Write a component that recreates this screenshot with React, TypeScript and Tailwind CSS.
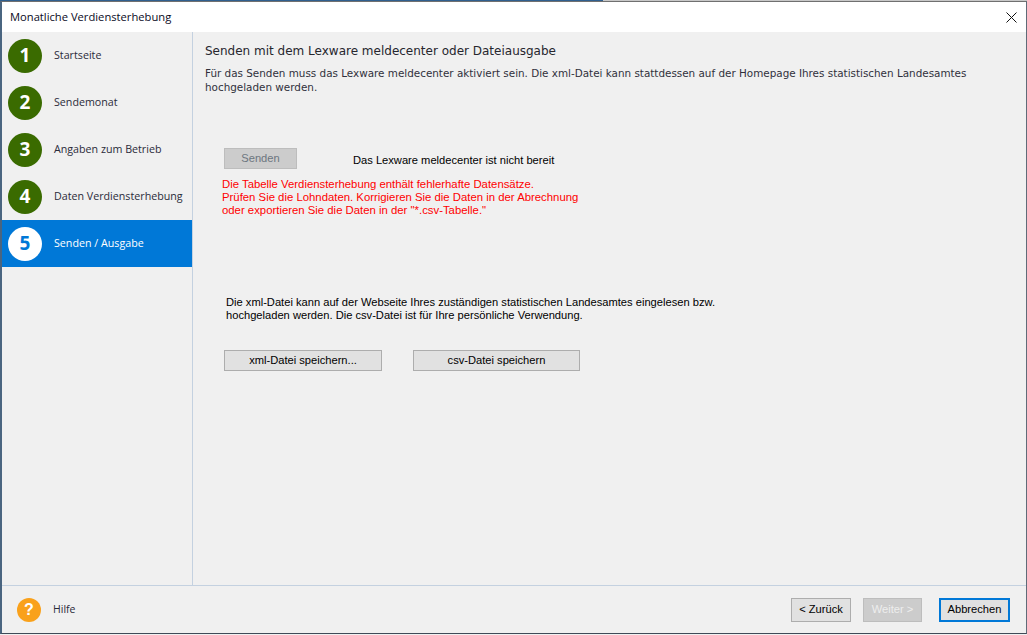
const steps = [
  { no: 1, label: "Startseite" },
  { no: 2, label: "Sendemonat" },
  { no: 3, label: "Angaben zum Betrieb" },
  { no: 4, label: "Daten Verdiensterhebung" },
  { no: 5, label: "Senden / Ausgabe", active: true },
];

const sans = "font-['Liberation_Sans',Arial,sans-serif]";
const ui = "font-['Open_Sans','Noto_Sans',sans-serif]";

function WizardStep({ no, label, active }: { no: number; label: string; active?: boolean }) {
  return (
    <div className={active ? "flex h-[47px] items-center bg-[#0078d7] pl-[6px] text-white" : "flex h-[47px] items-center pl-[6px] text-[#2b2b3a]"}>
      <div
        className={
          active
            ? "flex h-[34px] w-[34px] items-center justify-center rounded-full bg-white text-[19px] font-bold text-[#0078d7]"
            : "flex h-[34px] w-[34px] items-center justify-center rounded-full bg-[#3a6b00] text-[19px] font-bold text-white"
        }
      >
        {no}
      </div>
      <span className="ml-[12px] text-[10.7px]">{label}</span>
    </div>
  );
}

export default function App() {
  return (
    <div className={`h-[635px] w-[1027px] overflow-hidden bg-[#f0f0f0] ${sans}`}>
      <div className="flex h-[1px]">
        <div className="w-[603px] bg-[#2f5f8f]" />
        <div className="flex-1 bg-[#c8c8c8]" />
      </div>
      <div className="flex h-[633px] flex-col border-t border-r border-b border-l-2 border-t-[#707070] border-r-[#5f6b78] border-b-[#3f4a57] border-l-[#4a6580]">
        <div className="flex h-[30px] shrink-0 items-center justify-between bg-white pr-[9px] pl-[8px]">
          <span className={`text-[11.2px] text-[#0a0a1e] ${ui}`}>Monatliche Verdiensterhebung</span>
          <svg width="11" height="11" viewBox="0 0 11 11" className="text-[#111]">
            <path d="M0.5 0.5 L10.5 10.5 M10.5 0.5 L0.5 10.5" stroke="currentColor" strokeWidth="1" fill="none" />
          </svg>
        </div>

        <div className="flex min-h-0 flex-1">
          <aside className={`w-[191px] shrink-0 border-r border-r-[#c4d1e0] ${ui}`}>
            {steps.map((step) => (
              <WizardStep key={step.no} {...step} />
            ))}
          </aside>

          <main className="flex-1 text-[11.15px] text-black">
            <div className="pt-[12px] pl-[12px]">
              <h1 className="font-['DejaVu_Sans',Verdana,sans-serif] text-[12px] leading-[15px] font-normal text-[#26262e]">
                Senden mit dem Lexware meldecenter oder Dateiausgabe
              </h1>
              <p className="mt-[7px] w-[790px] font-['DejaVu_Sans',Verdana,sans-serif] text-[10.4px] leading-[14px] text-[#30303c]">
                Für das Senden muss das Lexware meldecenter aktiviert sein. Die xml-Datei kann stattdessen auf der Homepage Ihres statistischen Landesamtes hochgeladen werden.
              </p>
            </div>

            <div className="mt-[54px] flex items-center pl-[31px]">
              <button className="h-[21px] w-[73px] border border-[#bdbdbd] bg-[#cccccc] text-[#6d7680]">Senden</button>
              <span className="ml-[56px] pt-[4px]">Das Lexware meldecenter ist nicht bereit</span>
            </div>

            <p className="mt-[9px] pl-[29px] text-[11.35px] leading-[13px] text-[#ff0000]">
              Die Tabelle Verdiensterhebung enthält fehlerhafte Datensätze.
              <br />
              Prüfen Sie die Lohndaten. Korrigieren Sie die Daten in der Abrechnung
              <br />
              oder exportieren Sie die Daten in der "*.csv-Tabelle."
            </p>

            <p className="mt-[79px] pl-[33px] leading-[13px]">
              Die xml-Datei kann auf der Webseite Ihres zuständigen statistischen Landesamtes eingelesen bzw.
              <br />
              hochgeladen werden. Die csv-Datei ist für Ihre persönliche Verwendung.
            </p>

            <div className="mt-[28px] flex gap-[31px] pl-[31px]">
              <button className="h-[21px] w-[158px] border border-[#adadad] bg-[#e1e1e1]">xml-Datei speichern...</button>
              <button className="h-[21px] w-[167px] border border-[#adadad] bg-[#e1e1e1]">csv-Datei speichern</button>
            </div>
          </main>
        </div>

        <footer className="flex h-[48px] shrink-0 items-center border-t border-t-[#c4d1e0] pr-[16px] pl-[15px]">
          <div className="flex h-[24px] w-[24px] items-center justify-center rounded-full bg-[#f9a11b] text-[16px] font-bold text-white">?</div>
          <span className={`ml-[12px] text-[10.5px] text-[#2b2b3a] ${ui}`}>Hilfe</span>
          <div className="ml-auto flex items-center text-[11.15px]">
            <button className="h-[24px] w-[60px] border border-[#adadad] bg-[#e1e1e1]">&lt; Zurück</button>
            <button className="ml-[12px] h-[24px] w-[59px] border border-[#bdbdbd] bg-[#cccccc] text-[#eeeeee]">Weiter &gt;</button>
            <button className="ml-[17px] h-[24px] w-[71px] border-2 border-[#0078d7] bg-[#e1e1e1]">Abbrechen</button>
          </div>
        </footer>
      </div>
    </div>
  );
}
